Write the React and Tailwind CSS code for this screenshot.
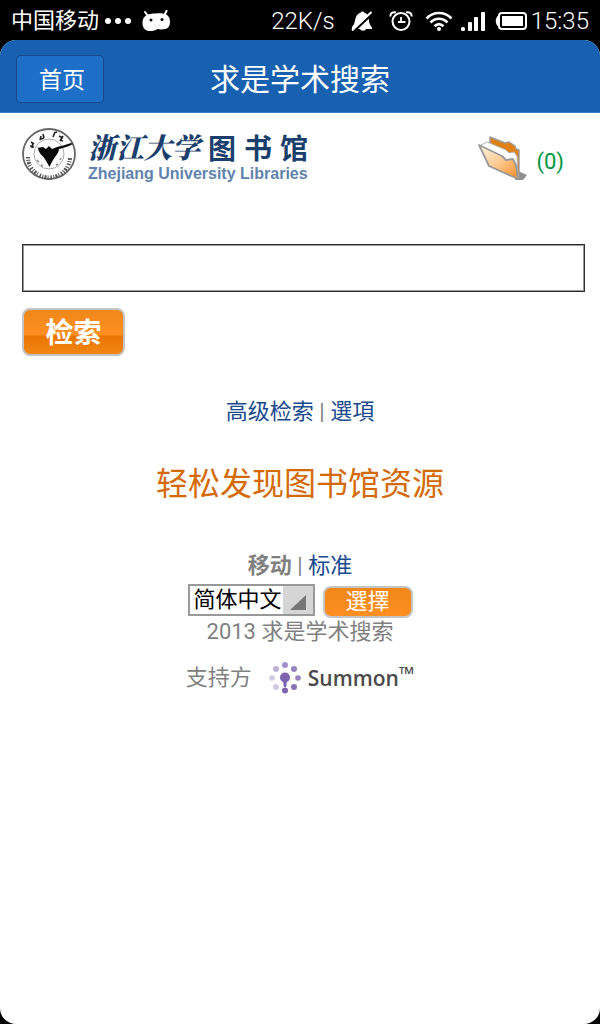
import { useState } from 'react'

const LANGUAGES = ['简体中文', '繁體中文', 'English']

/** Android notification glyph in the status bar. */
function DroidIcon() {
  return (
    <svg width="30" height="22" viewBox="0 0 30 22" aria-hidden="true">
      <path d="M4 2l3 4M25.500 1l-2 4" stroke="#fff" strokeWidth="2" strokeLinecap="round" />
      <path
        d="M1.500 13c0-6 4-9 9-9.300 5-.3 8-.7 12 0 4 .6 6.500 3 6.500 8.300 0 5-3 7-6 7.300-2.500.2-4.500.2-6.500-.3C14.500 20.500 12 21 9 21c-4.500 0-7.500-2.500-7.500-8z"
        fill="#fff"
      />
      <circle cx="10" cy="10" r="1.500" />
      <circle cx="21" cy="9.500" r="1.500" />
      <path d="M14 14v3M18 14v2" stroke="#ddd" strokeWidth="1" />
    </svg>
  )
}

function MutedIcon() {
  return (
    <svg width="22" height="20" viewBox="0 0 22 20" aria-hidden="true">
      <path
        d="M1 16c3-3 2.500-6 4-10 1-2.700 3-4 5-4.500C10 .3 13 .3 13 1.500c2.500.7 4 2.500 4.500 5C18.300 11 18 13 21 16.500V18H1z"
        fill="#fff"
      />
      <path d="M9 17.500h6c-.5 3-5.500 3-6 0z" fill="#fff" />
      <path d="M3 20L22 2" stroke="#000" strokeWidth="2.500" />
      <path d="M1 19.500L20.500 1" stroke="#fff" strokeWidth="2" />
    </svg>
  )
}

function AlarmIcon() {
  return (
    <svg width="24" height="20" viewBox="0 0 24 20" fill="none" stroke="#fff" aria-hidden="true">
      <circle cx="12" cy="10.500" r="8.500" strokeWidth="2" />
      <path d="M12 6v5h4.500M12 11H9" strokeWidth="1.800" />
      <path d="M1.500 5.500C1 2 4 .5 7 1.500M22.500 5.500C23 2 20 .5 17 1.500" strokeWidth="2" />
    </svg>
  )
}

function WifiIcon() {
  return (
    <svg width="28" height="20" viewBox="0 0 28 20" fill="none" stroke="#fff" aria-hidden="true">
      <path d="M1.500 7.500c7-7.300 18-7.300 25 0M5.500 11.500c5-5 12-5 17 0M9.500 15.300c2.800-2.600 6.200-2.600 9 0" strokeWidth="2.600" />
      <circle cx="14" cy="18" r="2" fill="#fff" stroke="none" />
    </svg>
  )
}

function SignalIcon() {
  return (
    <svg width="24" height="19" viewBox="0 0 24 19" fill="#fff" aria-hidden="true">
      <rect x="0" y="15" width="4" height="4" rx="1.500" />
      <rect x="7" y="10" width="4" height="9" rx="1" />
      <rect x="13" y="5" width="4" height="14" rx="1" />
      <rect x="20" y="0" width="4" height="19" rx="1" />
    </svg>
  )
}

function BatteryIcon() {
  return (
    <svg width="32" height="18" viewBox="0 0 32 18" aria-hidden="true">
      <path d="M4 4H2.500Q-1 9 2.500 14H4z" fill="#fff" />
      <rect x="4" y="1" width="27" height="16" rx="3" fill="none" stroke="#fff" strokeWidth="2" />
      <rect x="7" y="4" width="21" height="10" fill="#fff" />
    </svg>
  )
}

function StatusBar() {
  return (
    <div className="flex h-10 items-center justify-between pt-0.5 pr-[11px] pl-[11px] text-[22px] leading-9 text-white">
      <div className="flex items-center">
        <span>中国移动</span>
        <svg className="ml-1.5" width="26" height="6" viewBox="0 0 26 6" fill="#fff" aria-hidden="true">
          <circle cx="3" cy="3" r="3" />
          <circle cx="13" cy="3" r="3" />
          <circle cx="23" cy="3" r="3" />
        </svg>
        <span className="ml-2.5">
          <DroidIcon />
        </span>
      </div>
      <div className="flex items-center font-light">
        <span className="text-2xl leading-9">22K/s</span>
        <span className="ml-4 flex items-center gap-4">
          <MutedIcon />
          <AlarmIcon />
        </span>
        <span className="mr-2 ml-3">
          <WifiIcon />
        </span>
        <span className="mr-2.5">
          <SignalIcon />
        </span>
        <span className="mr-1">
          <BatteryIcon />
        </span>
        <span className="text-2xl leading-9">15:35</span>
      </div>
    </div>
  )
}

/** Round university seal: eagle in the middle, lettering round the rim. */
function Seal() {
  return (
    <svg width="54" height="52" viewBox="0 0 54 52" aria-hidden="true">
      <ellipse cx="27" cy="26" rx="26" ry="25" fill="#fff" stroke="#666" strokeWidth="1.800" />
      <circle cx="27" cy="26" r="15" fill="none" stroke="#aaa" strokeWidth="1" />
      <path
        d="M14 20l7-1 3 2 3-3 3 3 5-2 8-2 6-2 2 1-4 2-6 2-4 1c0 3-2 5-4 8-2 3-4 6-5.500 10-2-4-4-7-6-10-3-3-5-5-5.500-9z"
        fill="#0a0a0a"
      />
      <path d="M9 14l3 2M8 18l4 1M10 20l1-5M19 8l-1 4M21 6l1 4M19 11l3-1M32 5l3-1M33 4l-2 5M37 8l4 2M41 8l-3 5M38 12l3 1" stroke="#222" strokeWidth="1.600" fill="none" />
      <path d="M15 32l2 2M19 37l2 1M34 37l2-1M38 32l1-2" stroke="#888" strokeWidth="1.500" />
      <path
        d="M6 29A21 20.500 0 0 0 48 29"
        fill="none"
        stroke="#555"
        strokeWidth="4"
        strokeDasharray="1.500 1.400 1 1.200 2 1.200 1 2"
      />
    </svg>
  )
}

function FolderIcon() {
  return (
    <svg width="50" height="44" viewBox="0 0 50 44" aria-hidden="true">
      <defs>
        <linearGradient id="folderFront" x1="0" y1="0" x2="1" y2="1">
          <stop offset="0" stopColor="#fff3e4" />
          <stop offset="0.500" stopColor="#fdcb93" />
          <stop offset="1" stopColor="#f18c22" />
        </linearGradient>
      </defs>
      <path d="M40 35l9 4-4 5h-8z" fill="#8f8f8f" />
      <path d="M12 1l15 6 4-1 6 4 1 3 3 1v28l-5-4-24-30z" fill="#e08115" stroke="#a09a94" strokeWidth="1.500" strokeLinejoin="round" />
      <path d="M3 9l6-3 19 8 3 3 5-1 3 4 1 20L8 24z" fill="#fff" stroke="#b5b5b5" strokeWidth="1" />
      <path
        d="M1 9l23 11 4 4 7-1 3 6 2 14L11 30z"
        fill="url(#folderFront)"
        stroke="#999"
        strokeWidth="1.800"
        strokeLinejoin="round"
      />
    </svg>
  )
}

function Brand() {
  return (
    <div className="flex items-start gap-3">
      <Seal />
      <div className="text-[#1b3f6d]">
        <div className="flex h-9 items-center gap-2 pt-2 leading-9 font-bold">
          <span className="pb-2 font-['Noto_Serif_CJK_SC','Noto_Sans_CJK_SC',serif] text-[28px] font-black italic">
            浙江大学
          </span>
          <span className="flex gap-2 text-[28px]">
            {['图', '书', '馆'].map((char) => (
              <span key={char}>{char}</span>
            ))}
          </span>
        </div>
        <div className="mt-0.5 font-['Liberation_Sans',sans-serif] text-base leading-4 font-bold text-[#5f83ac]">
          Zhejiang University Libraries
        </div>
      </div>
    </div>
  )
}

function SummonLogo() {
  return (
    <span className="flex items-center gap-1.5">
      <svg width="34" height="32" viewBox="0 0 34 32" aria-hidden="true">
        <g fill="#7b63ae">
          <circle cx="17" cy="15.500" r="5" />
          <path d="M15 18h4l-.8 7h-2.400z" />
          <circle cx="17" cy="28.500" r="3" />
          <circle cx="26" cy="25" r="3" opacity="0.900" />
          <circle cx="30" cy="16" r="2.800" opacity="0.800" />
          <circle cx="26" cy="7" r="3" opacity="0.800" />
          <circle cx="17" cy="3" r="3" opacity="0.700" />
          <circle cx="8" cy="7" r="3" opacity="0.500" />
          <circle cx="4" cy="16" r="2.800" opacity="0.350" />
          <circle cx="8" cy="25" r="3" opacity="0.350" />
        </g>
      </svg>
      <span className="flex items-start font-['Open_Sans',sans-serif] leading-7 font-semibold text-[#4a4a4a]">
        <span className="text-[21px]">Summon</span>
        <span className="text-xl leading-5">™</span>
      </span>
    </span>
  )
}

/** Language drop-down with the flat grey corner arrow. */
function LanguageSelect({ value, onChange }) {
  return (
    <div className="relative">
      <select
        aria-label="语言"
        value={value}
        onChange={(event) => onChange(event.target.value)}
        className="block h-8 w-[127px] appearance-none border-2 border-[#999] bg-white pl-1 text-[22px] leading-7 text-black"
      >
        {LANGUAGES.map((name) => (
          <option key={name}>{name}</option>
        ))}
      </select>
      <span className="pointer-events-none absolute inset-y-0.5 right-0.5 flex w-[30px] items-center justify-center bg-[#d5d5d5]">
        <svg className="mt-1" width="16" height="15" viewBox="0 0 16 15" aria-hidden="true">
          <path d="M16 0v15H0z" fill="#777" />
        </svg>
      </span>
    </div>
  )
}

export default function App() {
  const [query, setQuery] = useState('')
  const [language, setLanguage] = useState(LANGUAGES[0])

  return (
    <div className="flex min-h-screen flex-col bg-black font-[Roboto,'Noto_Sans_CJK_SC',sans-serif]">
      <StatusBar />

      <div className="flex grow flex-col overflow-hidden rounded-2xl bg-white text-[22px] leading-7 text-[#808080]">
        <header className="grid h-[73px] grid-cols-[1fr_auto_1fr] items-center border-b border-[#3a7cc4] bg-[#1761b0] px-4 pt-1.5 text-white">
          <button
            type="button"
            className="h-12 w-22 justify-self-start rounded-sm border border-[#17498c] bg-[#1d6fc7] pt-1 pl-1 text-[23px] leading-8"
          >
            首页
          </button>
          <h1 className="pt-0.5 text-[30px] leading-10">求是学术搜索</h1>
        </header>

        <div className="flex items-start justify-between pt-[15px] pr-9 pl-[22px]">
          <Brand />
          <a href="#saved" className="flex items-center gap-2 pt-2 text-[#009640]">
            <FolderIcon />
            <span className="pt-2">(0)</span>
          </a>
        </div>

        <form className="mt-[62px] pr-[15px] pl-[22px]" onSubmit={(event) => event.preventDefault()}>
          <input
            type="text"
            aria-label="检索"
            value={query}
            onChange={(event) => setQuery(event.target.value)}
            className="block h-12 w-full border border-[#2e2e2e] px-2 text-black shadow-[inset_0_0_0_1px_#999] outline-none"
          />
          <button
            type="submit"
            className="mt-4 block h-12 w-[103px] rounded-lg border-2 border-[#c4c4c4] bg-[linear-gradient(#ef8719,#ff8f22_55%,#ea7500_60%,#f28614)] pt-1 text-[28px] leading-10 font-bold text-white"
          >
            检索
          </button>
        </form>

        <nav className="mt-[42px] text-center">
          <a href="#advanced" className="text-[#194a8d]">高级检索</a> |{' '}
          <a href="#options" className="text-[#194a8d]">選項</a>
        </nav>

        <h2 className="mt-[38px] text-center text-[32px] leading-10 text-[#d46a05]">轻松发现图书馆资源</h2>

        <footer className="mt-12 flex flex-col items-center">
          <div>
            <strong>移动</strong> | <a href="#standard" className="text-[#194a8d]">标准</a>
          </div>
          <form className="mt-1 flex items-start gap-2" onSubmit={(event) => event.preventDefault()}>
            <LanguageSelect value={language} onChange={setLanguage} />
            <button
              type="submit"
              className="mt-0.5 h-8 w-[90px] rounded-lg border-2 border-[#c4c4c4] bg-linear-to-b from-[#ef8718] to-[#ff8f22] leading-7 text-white"
            >
              選擇
            </button>
          </form>
          <p>2013 求是学术搜索</p>
          <div className="mt-4 flex items-center gap-4">
            支持方
            <SummonLogo />
          </div>
        </footer>
      </div>
    </div>
  )
}
